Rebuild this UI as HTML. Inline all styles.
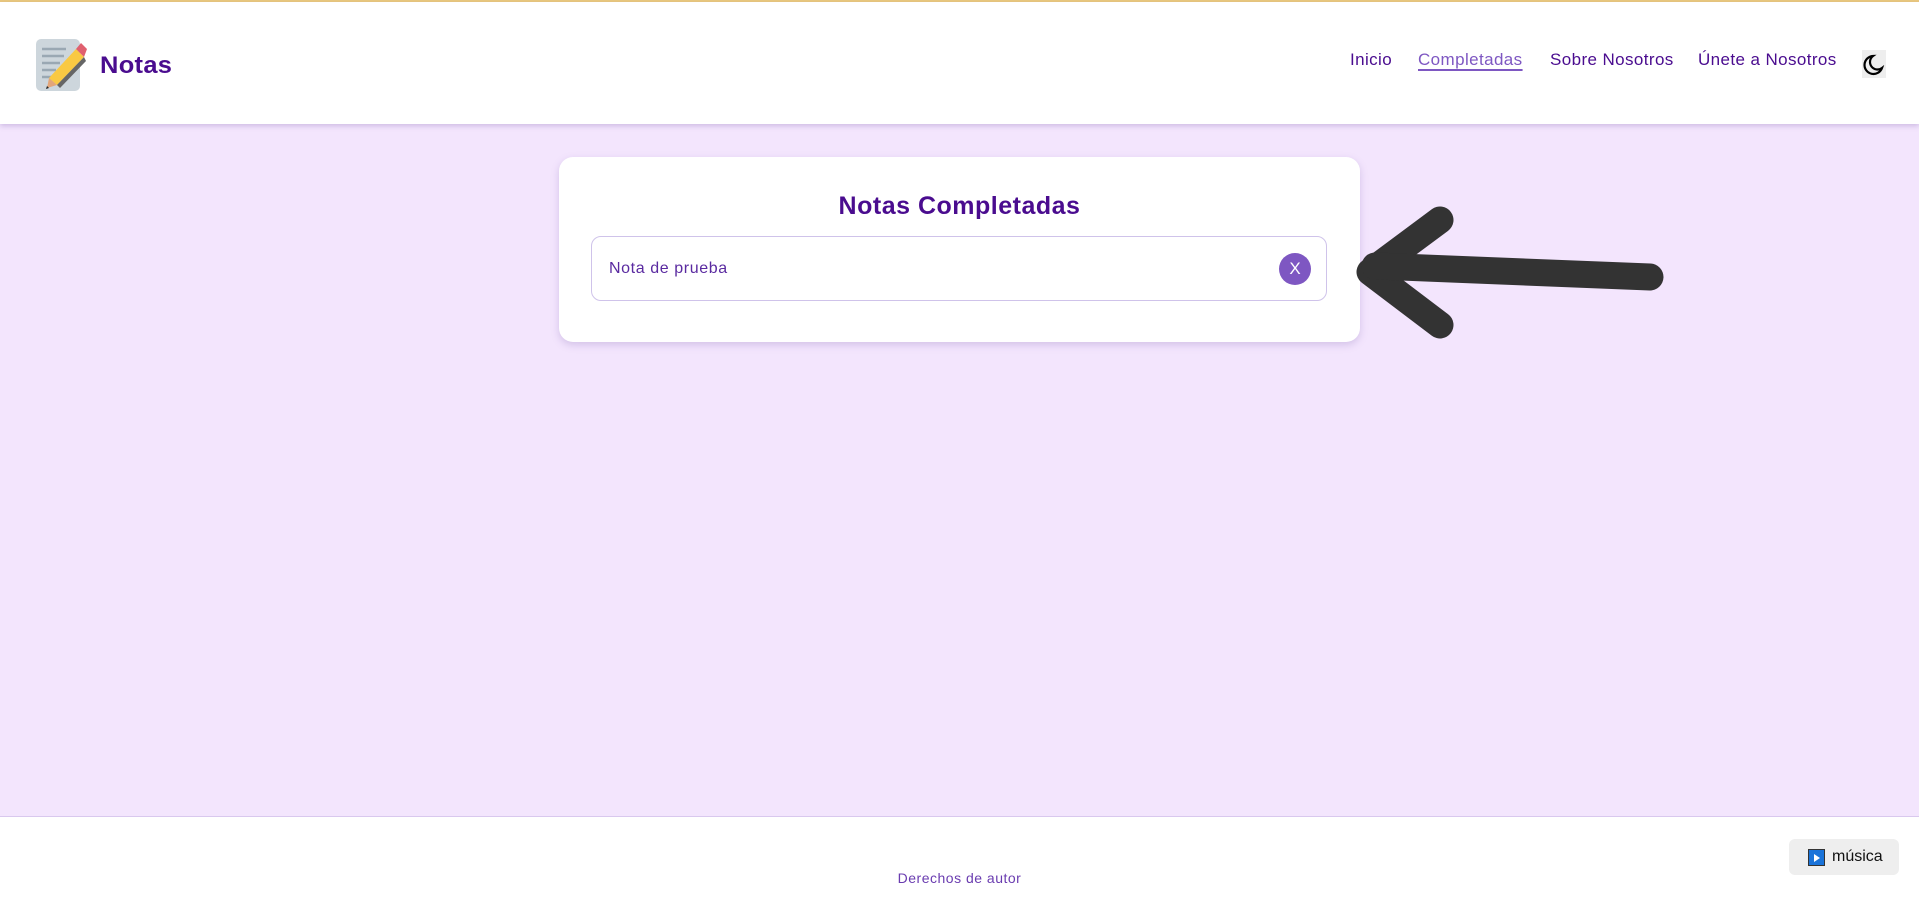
<!DOCTYPE html>
<html><head><meta charset="utf-8"><style>
*{margin:0;padding:0;box-sizing:border-box}
html,body{width:1919px;height:920px;overflow:hidden}
body{background:#f3e5fd;font-family:"Liberation Sans",sans-serif;position:relative}
.top{position:absolute;left:0;top:0;width:1919px;height:2px;background:#ebc97d}
header{position:absolute;left:0;top:2px;width:1919px;height:122px;background:#fff;box-shadow:0 2px 5px rgba(120,90,170,.3)}
.logo{position:absolute;left:36px;top:35px}
.brand{position:absolute;left:100px;top:50px;font-size:24px;font-weight:900;color:#4a0c8f;letter-spacing:.3px;transform:scaleX(1.06);transform-origin:left}
nav a{position:absolute;top:48px;font-size:17px;letter-spacing:.4px;color:#4a0c8f;text-decoration:none;white-space:nowrap}
nav a.act{color:#7e57c2;text-decoration:underline;text-decoration-thickness:2px;text-underline-offset:4px}
.moon{position:absolute;left:1862px;top:48px;width:24px;height:28px;background:#eee}
.card{position:absolute;left:559px;top:157px;width:801px;height:185px;background:#fff;border-radius:14px;box-shadow:0 3px 8px rgba(120,90,170,.25)}
.card h2{position:absolute;left:0;width:100%;top:35px;text-align:center;font-size:25px;font-weight:900;color:#4a0c8f;letter-spacing:.5px}
.item{position:absolute;left:32px;top:79px;width:736px;height:65px;border:1px solid #cfc3ea;border-radius:10px}
.item span{position:absolute;left:17px;top:23px;font-size:16px;letter-spacing:.6px;color:#5a2aa0}
.x{position:absolute;right:15px;top:16px;width:32px;height:32px;border-radius:50%;background:#7e57c2;color:#fff;font-size:17px;text-align:center;line-height:32px}
footer{position:absolute;left:0;top:816px;width:1919px;height:104px;background:#fff;border-top:1px solid #d9c8ee}
.copy{position:absolute;left:0;width:100%;top:53px;text-align:center;font-size:14px;letter-spacing:.5px;color:#6a3cb0}
.mus{position:absolute;left:1789px;top:22px;width:110px;height:36px;background:#eee;border-radius:6px;font-size:16px;color:#111}
.mus i{position:absolute;left:19px;top:10px;width:17px;height:17px;background:#1a73d9;border:1.5px solid #333}
.mus i:after{content:"";position:absolute;left:5px;top:3.5px;border-left:6px solid #fff;border-top:4px solid transparent;border-bottom:4px solid transparent}
.mus b{position:absolute;left:43px;top:9px;font-weight:normal}
</style></head><body>
<div class="top"></div>
<header>
<svg class="logo" width="52" height="56" viewBox="0 0 52 56">
<rect x="0" y="2" width="44" height="52" rx="5" fill="#cdd6dc"/>
<g stroke="#9aa8b3" stroke-width="2.5"><line x1="6" y1="12" x2="30" y2="12"/><line x1="6" y1="19" x2="28" y2="19"/><line x1="6" y1="26" x2="24" y2="26"/><line x1="6" y1="33" x2="20" y2="33"/><line x1="6" y1="40" x2="18" y2="40"/></g>
<path d="M13 41 L40 12 L48 20 L21 48 Z" fill="#f9c943"/>
<path d="M40 12 L45 6 L51 12 L48 20 Z" fill="#e0606f"/>
<path d="M13 41 L21 48 L11 51 Z" fill="#e3a579"/>
<path d="M11 49 L13 51 L10 52Z" fill="#222"/>
<path d="M21 48 L48 20 L50 24 L24 51Z" fill="#666"/>
</svg>
<div class="brand">Notas</div>
<nav>
<a style="left:1350px">Inicio</a>
<a class="act" style="left:1418px">Completadas</a>
<a style="left:1550px">Sobre Nosotros</a>
<a style="left:1698px">Únete a Nosotros</a>
</nav>
<div class="moon"><svg width="24" height="28" viewBox="0 0 24 28"><path d="M11 6 A9 9 0 1 0 20 18 A7 7 0 0 1 11 6Z" fill="none" stroke="#000" stroke-width="2.2"/></svg></div>
</header>
<div class="card"><h2>Notas Completadas</h2>
<div class="item"><span>Nota de prueba</span><div class="x">X</div></div></div>
<svg style="position:absolute;left:1340px;top:195px" width="340" height="160" viewBox="1340 195 340 160">
<g stroke="#333" stroke-width="27" stroke-linecap="round" stroke-linejoin="round" fill="none">
<path d="M1440 220 L1370 272 L1440 325"/>
<path d="M1375 266 L1650 277"/>
</g></svg>
<footer><div class="copy">Derechos de autor</div>
<div class="mus"><i></i><b>música</b></div></footer>
</body></html>
